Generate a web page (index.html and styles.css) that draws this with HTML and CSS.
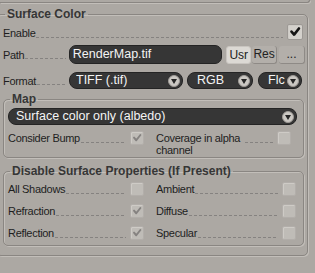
FILE: index.html
```html
<!DOCTYPE html>
<html>
<head>
<meta charset="utf-8">
<link rel="stylesheet" href="styles.css">
</head>
<body>
<div class="prev"></div>
<fieldset class="group outer">
  <legend>Surface Color</legend>
  <div class="row enable">
    <span class="lbl">Enable</span><span class="lead"></span>
    <span class="cb big on"><svg viewBox="0 0 16 16"><path d="M4 7.5 L7 11 L12.5 4" /></svg></span>
  </div>
  <div class="row path">
    <div class="lblcell"><span class="lbl">Path</span><span class="lead"></span></div>
    <div class="field">RenderMap.tif</div>
    <button class="btn usr">Usr</button>
    <button class="btn res">Res</button>
    <button class="btn dots">...</button>
  </div>
  <div class="row format">
    <div class="lblcell"><span class="lbl">Format</span><span class="lead"></span></div>
    <div class="dd tiff"><span class="ddtext">TIFF (.tif)</span><span class="arrow"></span></div>
    <div class="dd rgb"><span class="ddtext">RGB</span><span class="arrow"></span></div>
    <div class="dd flc"><span class="ddtext">Flc</span><span class="arrow"></span></div>
  </div>
  <fieldset class="group inner map">
    <legend>Map</legend>
    <div class="dd mapdd"><span class="ddtext">Surface color only (albedo)</span><span class="arrow"></span></div>
    <div class="grid mapgrid">
      <div class="cell"><span class="lbl">Consider Bump</span><span class="lead"></span><span class="cb on dis"><svg viewBox="0 0 16 16"><path d="M4 7.5 L7 11 L12.5 4" /></svg></span></div>
      <div class="cell"><span class="lbl wrap">Coverage in alpha channel</span><span class="lead"></span><span class="cb"></span></div>
    </div>
  </fieldset>
  <fieldset class="group inner dis-group">
    <legend>Disable Surface Properties (If Present)</legend>
    <div class="grid disgrid">
      <div class="cell"><span class="lbl">All Shadows</span><span class="lead"></span><span class="cb"></span></div>
      <div class="cell"><span class="lbl">Ambient</span><span class="lead"></span><span class="cb"></span></div>
      <div class="cell"><span class="lbl">Refraction</span><span class="lead"></span><span class="cb on dis"><svg viewBox="0 0 16 16"><path d="M4 7.5 L7 11 L12.5 4" /></svg></span></div>
      <div class="cell"><span class="lbl">Diffuse</span><span class="lead"></span><span class="cb"></span></div>
      <div class="cell"><span class="lbl">Reflection</span><span class="lead"></span><span class="cb on dis"><svg viewBox="0 0 16 16"><path d="M4 7.5 L7 11 L12.5 4" /></svg></span></div>
      <div class="cell"><span class="lbl">Specular</span><span class="lead"></span><span class="cb"></span></div>
    </div>
  </fieldset>
</fieldset>
</body>
</html>
```
FILE: styles.css
```css
html, body {
  margin: 0;
  padding: 0;
  background: #aca8a3;
  overflow: hidden;
}
body {
  width: 315px;
  height: 273px;
  font-family: "Liberation Sans", Arial, sans-serif;
  font-size: 11px;
  letter-spacing: -0.3px;
  color: #1e1e1e;
}
.prev {
  width: 309px;
  height: 2px;
  border-bottom: 1px solid #8a8682;
  border-right: 1px solid #8a8682;
  border-bottom-right-radius: 4px;
  box-shadow: 1px 1px 0 #c2beb9;
}
.group {
  box-sizing: border-box;
  border: 1px solid #8a8682;
  border-radius: 5px;
  margin: 0;
  min-width: 0;
  box-shadow: 1px 1px 0 #c2beb9, inset 1px 1px 0 #c2beb9;
}
.group > legend {
  font-weight: bold;
  font-size: 12px;
  letter-spacing: 0;
  line-height: 14px;
  color: #363636;
  padding: 0 2px;
  margin-left: 2px;
}
.outer {
  margin-top: 4px;
  margin-left: -4px;
  width: 312px;
  padding: 0 2px 9px 6px;
}
.row {
  display: flex;
  align-items: center;
}
.lbl {
  white-space: nowrap;
  line-height: 12px;
}
.lead {
  flex: 1;
  height: 1px;
  align-self: center;
  margin-top: 8px;
  margin-left: 1px;
  margin-right: 4px;
  background-image: repeating-linear-gradient(to right, #858280 0 3px, transparent 3px 5px);
}
.enable {
  margin-top: 3px;
  height: 18px;
}
.enable .lead {
  margin-right: 4px;
}
.cb {
  box-sizing: border-box;
  width: 14px;
  height: 14px;
  flex: none;
  border-radius: 2px;
  background: #bfbcb7;
  border: 1px solid #b2aeaa;
  box-shadow: inset 1px 1px 0 #cecbc6;
  display: flex;
}
.cb svg {
  width: 100%;
  height: 100%;
}
.cb path {
  fill: none;
  stroke: #8a8784;
  stroke-width: 2.6;
  stroke-linecap: round;
  stroke-linejoin: round;
}
.cb.big {
  width: 16px;
  height: 16px;
  margin-right: 2px;
  margin-top: -2px;
  background: #d4d1cc;
  border-color: #9d9995;
}
.cb.big path {
  stroke: #151515;
  stroke-width: 3;
}
.path {
  margin-top: 3px;
  height: 19px;
}
.lblcell {
  width: 63px;
  display: flex;
  align-items: center;
  align-self: stretch;
}
.lblcell .lead {
  margin-right: 0;
}
.field {
  margin-left: 3px;
  width: 154px;
  height: 19px;
  box-sizing: border-box;
  background: #363636;
  border: 1px solid #242424;
  border-radius: 7px;
  color: #f4f4f4;
  font-size: 12.5px;
  letter-spacing: 0;
  line-height: 17px;
  padding-left: 3px;
}
.btn {
  font-family: "Liberation Sans", Arial, sans-serif;
  font-size: 12px;
  color: #222;
  height: 18px;
  padding: 0;
  margin: 0;
  box-sizing: border-box;
  border: none;
  border-radius: 3px;
  line-height: 16px;
  text-align: center;
}
.usr {
  margin-left: 4px;
  width: 25px;
  background: #dcd9d4;
  border: 1px solid #c9c5c0;
}
.res {
  margin-left: 1px;
  width: 25px;
  background: #b3afaa;
  border-bottom: 1px solid #8e8a86;
  border-right: 1px solid #8e8a86;
}
.dots {
  margin-left: 2px;
  width: 26px;
  background: #b3afaa;
  border-bottom: 1px solid #8e8a86;
  border-right: 1px solid #8e8a86;
}
.format {
  margin-top: 8px;
  height: 17px;
}
.dd {
  box-sizing: border-box;
  height: 17px;
  background: #363636;
  border: 1px solid #242424;
  border-radius: 8px;
  color: #f4f4f4;
  font-size: 12.5px;
  letter-spacing: 0;
  line-height: 15px;
  display: flex;
  align-items: center;
  padding-left: 6px;
  padding-right: 2px;
}
.ddtext {
  flex: 1;
  white-space: nowrap;
  overflow: hidden;
}
.arrow {
  position: relative;
  flex: none;
  width: 12px;
  height: 12px;
  border-radius: 50%;
  background: #cbc8c3;
  border: 1px solid #9e9a96;
  box-sizing: border-box;
}
.arrow::after {
  content: "";
  position: absolute;
  left: 2px;
  top: 3px;
  border-left: 3px solid transparent;
  border-right: 3px solid transparent;
  border-top: 5px solid #262626;
}
.tiff {
  margin-left: 3px;
  width: 114px;
}
.rgb {
  margin-left: 4px;
  width: 66px;
  padding-left: 9px;
}
.flc {
  margin-left: 5px;
  width: 44px;
  padding-left: 9px;
}
.inner {
  width: 301px;
  padding: 0 4px 1px 4px;
}
.map {
  margin-top: 3px;
}
.mapdd {
  margin-top: 2px;
  width: 289px;
  padding-left: 7px;
}
.grid {
  display: grid;
  column-gap: 12px;
}
.mapgrid {
  margin-top: 6px;
  grid-template-columns: 136px 135px;
}
.cell {
  display: flex;
  align-items: flex-start;
  height: 14px;
}
.cell .lbl {
  margin-top: 1px;
}
.cell .lead {
  align-self: flex-start;
  margin-top: 11px;
}
.mapgrid .cell {
  height: auto;
}
.lbl.wrap {
  white-space: normal;
  width: 88px;
}
.dis-group {
  margin-top: 6px;
  padding-bottom: 5px;
}
.disgrid {
  margin-top: 4px;
  grid-template-columns: 136px 140px;
  row-gap: 8px;
}
.cb.dis path {
  stroke: #858280;
}
```
